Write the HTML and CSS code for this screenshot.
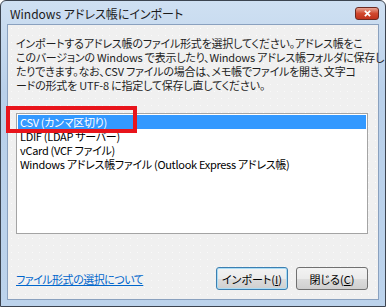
FILE: index.html
```html
<!DOCTYPE html>
<html lang="ja">
<head>
    <meta charset="UTF-8">
    <title>Windows アドレス帳にインポート</title>
    <link rel="stylesheet" href="styles.css">
</head>
<body>
    <div class="window">
        <div class="titlebar">
            <span class="title">Windows アドレス帳にインポート</span>
            <span class="close-btn">
                <svg viewBox="0 0 10 8" class="close-x"><path d="M2 1 L8 7 M8 1 L2 7"/></svg>
            </span>
        </div>
        <div class="client">
            <p class="desc">インポートするアドレス帳のファイル形式を選択してください。アドレス帳をこ<br>このバージョンの Windows で表示したり、Windows アドレス帳フォルダに保存し<br>たりできます。なお、CSV ファイルの場合は、メモ帳でファイルを開き、文字コ<br>ードの形式を UTF-8 に指定して保存し直してください。</p>
            <ul class="listbox">
                <li class="selected">CSV (カンマ区切り)</li>
                <li>LDIF (LDAP サーバー)</li>
                <li>vCard (VCF ファイル)</li>
                <li>Windows アドレス帳ファイル (Outlook Express アドレス帳)</li>
            </ul>
            <div class="footer">
                <a class="help-link" href="#">ファイル形式の選択について</a>
                <div class="buttons">
                    <button class="btn default">インポート(<u>I</u>)</button>
                    <button class="btn">閉じる(<u>C</u>)</button>
                </div>
            </div>
        </div>
    </div>
    <div class="highlight"></div>
</body>
</html>
```

FILE: styles.css
```css
body {
    margin: 0;
    font-family: "Noto Sans CJK JP", sans-serif;
    font-feature-settings: "palt";
    font-size: 11px;
    color: #000;
    position: relative;
}
.window {
    width: 386px;
    height: 307px;
    box-sizing: border-box;
    border: 1px solid #3c4450;
    border-radius: 6px 6px 0 0;
    background: linear-gradient(#cfe0f2, #b9d0ea 30%, #bcd3ec);
    padding: 0 6px 6px;
    display: flex;
    flex-direction: column;
}
.titlebar {
    height: 23px;
    display: flex;
    align-items: center;
    justify-content: space-between;
    padding-left: 3px;
}
.title {
    font-size: 12px;
    color: #1a1a1a;
    margin-top: 2px;
}
.close-btn {
    width: 22px;
    height: 11px;
    margin-top: 1px;
    border: 1px solid #6b2a22;
    border-radius: 3px;
    background: linear-gradient(#e8a493, #d0482e 50%, #c1321c);
    display: flex;
    align-items: center;
    justify-content: center;
}
.close-x {
    width: 9px;
    height: 7px;
    stroke: #fff;
    stroke-width: 2;
    fill: none;
}
.client {
    flex: 1;
    border: 1px solid #8aa1bf;
    background-color: #f0f0f0;
    background-image: radial-gradient(#fafafa 0.7px, transparent 0.9px);
    background-size: 7px 7px;
    padding: 11px 10px 9px 8px;
    display: flex;
    flex-direction: column;
}
.desc {
    margin: 0;
    line-height: 14px;
    letter-spacing: -0.2px;
    white-space: nowrap;
    color: #1e1e1e;
}
.listbox {
    list-style: none;
    margin: 21px 0 0;
    padding: 1px;
    height: 117px;
    border: 1px solid #a4a4a4;
    background: #fff;
}
.listbox li {
    height: 14px;
    line-height: 14px;
    padding-left: 2px;
    letter-spacing: -0.3px;
    white-space: nowrap;
}
.listbox li.selected {
    background: #3399ff;
    color: #fff;
}
.footer {
    margin-top: auto;
    display: flex;
    align-items: center;
    justify-content: space-between;
}
.help-link {
    color: #0066cc;
    letter-spacing: -0.5px;
    text-decoration: underline;
}
.buttons {
    display: flex;
    gap: 8px;
}
.btn {
    width: 72px;
    height: 23px;
    padding: 0;
    font-family: inherit;
    font-size: 11px;
    font-feature-settings: "palt";
    color: #000;
    border: 1px solid #707070;
    border-radius: 3px;
    background: linear-gradient(#f3f3f3, #ebebeb 50%, #dddddd 51%, #cfcfcf);
}
.btn.default {
    border-color: #3c7fb1;
    box-shadow: inset 0 0 0 1px #a9dcf5;
}
.highlight {
    position: absolute;
    left: 6px;
    top: 106px;
    width: 123px;
    height: 19px;
    border: 4px solid #e8141b;
}
```
